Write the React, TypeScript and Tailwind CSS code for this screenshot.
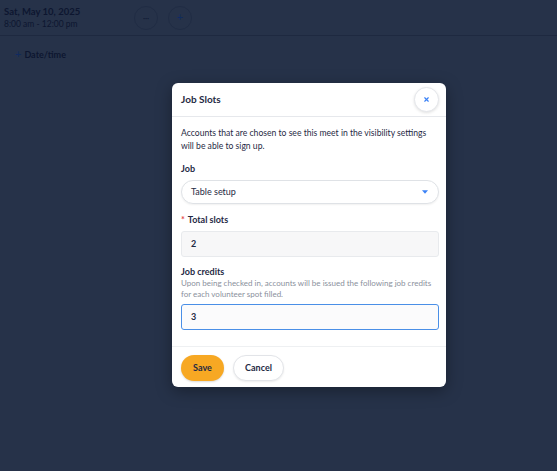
import { X } from "lucide-react";

const font = { fontFamily: "Lato, 'Noto Sans', sans-serif" };

function Backdrop() {
  return (
    <div className="text-[#0d1630]">
      <div className="flex h-[36px] items-center border-b border-[#1e2940] pl-[4px]">
        <div className="w-[124px]">
          <div className="text-[9.5px] font-bold leading-[12px]">Sat, May 10, 2025</div>
          <div className="text-[8.5px] leading-[12px]">8:00 am - 12:00 pm</div>
        </div>
        <div className="ml-[6px] flex h-[24px] w-[24px] items-center justify-center rounded-full border border-[#202c44] text-[8px]">
          ···
        </div>
        <div className="ml-[10px] flex h-[24px] w-[24px] items-center justify-center rounded-full border border-[#202c44] text-[11px] text-[#102a60]">
          +
        </div>
      </div>
      <div className="mt-[10px] ml-[15px] flex items-center gap-[3px] text-[9px] font-bold">
        <span className="text-[11px] font-normal text-[#102a60]">+</span>Date/time
      </div>
    </div>
  );
}

export default function App() {
  return (
    <div className="relative h-[471px] w-[557px] overflow-hidden bg-[#263249]" style={font}>
      <Backdrop />
      <div className="absolute left-[172px] top-[83px] flex w-[274px] flex-col overflow-hidden rounded-[6px] bg-white shadow-[0_4px_16px_rgba(0,0,0,0.35)]">
        <div className="flex h-[34px] items-center justify-between border-b border-[#e6e8ec] pl-[9px] pr-[7px]">
          <span className="text-[10px] font-bold text-[#1f2a44]">Job Slots</span>
          <button
            type="button"
            className="flex h-[25px] w-[25px] items-center justify-center rounded-full border border-[#e4e6ea] bg-white shadow-[0_1px_3px_rgba(0,0,0,0.12)]"
          >
            <X className="h-[7px] w-[7px] text-[#3b82f6]" strokeWidth={4} />
          </button>
        </div>

        <div className="flex flex-col pl-[9px] pr-[7px] pb-[16px] pt-[10px] text-[#1f2a44]">
          <p className="text-[8.6px] leading-[13px]">
            Accounts that are chosen to see this meet in the visibility settings will be able to sign up.
          </p>

          <label className="mt-[10px] text-[9px] font-bold leading-[12px]">Job</label>
          <div className="mt-[5px] flex h-[24px] items-center justify-between rounded-full border border-[#dfe2e6] bg-white pl-[9px] pr-[10px] shadow-[0_1px_2px_rgba(0,0,0,0.06)]">
            <span className="text-[9px]">Table setup</span>
            <svg width="6" height="4" viewBox="0 0 6 4">
              <path d="M0 0.3h6L3 3.8z" fill="#3b82f6" />
            </svg>
          </div>

          <label className="mt-[10px] text-[9px] font-bold leading-[12px]">
            <span className="mr-[3px] text-[#e5484d]">*</span>Total slots
          </label>
          <div className="mt-[5px] flex h-[26px] items-center rounded-[3px] border border-[#e8eaed] bg-[#f7f7f8] pl-[9px] text-[9px] font-bold">
            2
          </div>

          <label className="mt-[9px] text-[9px] font-bold leading-[12px]">Job credits</label>
          <p className="text-[8px] leading-[11px] text-[#8a909c]">
            Upon being checked in, accounts will be issued the following job credits for each volunteer spot filled.
          </p>
          <div className="mt-[4px] flex h-[26px] items-center rounded-[3px] border border-[#4a8fe7] bg-[#fbfbfc] pl-[9px] text-[9px] font-bold">
            3
          </div>
        </div>

        <div className="flex items-center gap-[9px] border-t border-[#eef0f2] px-[9px] pb-[6px] pt-[8px]">
          <button
            type="button"
            className="flex h-[26px] w-[43px] items-center justify-center rounded-full bg-[#f7a823] text-[9px] font-bold text-[#1f2a44] shadow-[0_1px_2px_rgba(0,0,0,0.15)]"
          >
            Save
          </button>
          <button
            type="button"
            className="flex h-[26px] w-[51px] items-center justify-center rounded-full border border-[#e2e4e8] bg-white text-[9px] font-bold text-[#1f2a44] shadow-[0_1px_2px_rgba(0,0,0,0.08)]"
          >
            Cancel
          </button>
        </div>
      </div>
    </div>
  );
}
